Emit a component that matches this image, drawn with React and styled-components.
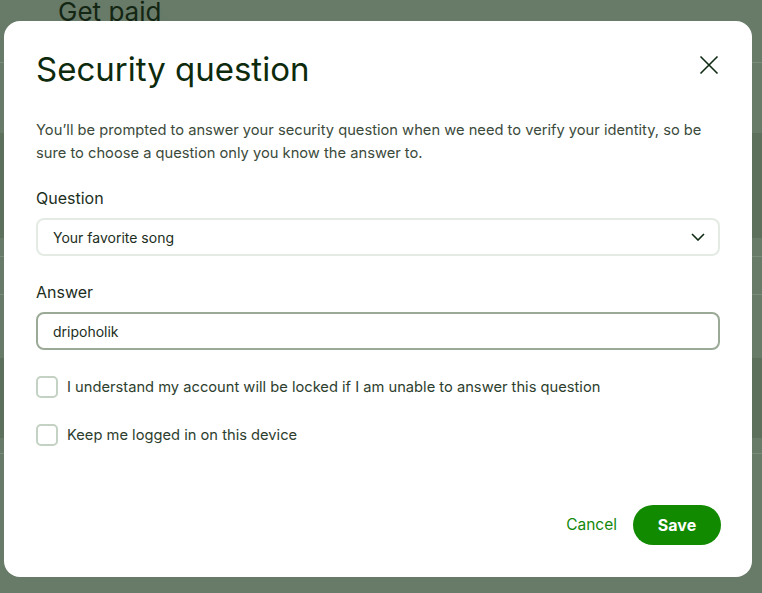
import React, { useState } from 'react';
import styled, { createGlobalStyle } from 'styled-components';

const GlobalStyle = createGlobalStyle`
  html, body {
    margin: 0;
    padding: 0;
    height: 100%;
    overflow: hidden;
  }
  body {
    font-family: Inter, 'Liberation Sans', Arial, sans-serif;
    background: #687a68;
  }
  * {
    box-sizing: border-box;
  }
`;

const Page = styled.div`
  position: relative;
  width: 762px;
  height: 593px;
  overflow: hidden;
  background: #687a68;
`;

const Backdrop = styled.div`
  display: flex;
  flex-direction: column;
  height: 100%;
`;

const PageTitle = styled.h1`
  margin: 0;
  padding: 0 0 0 58px;
  font-size: 26px;
  font-weight: 400;
  line-height: 24px;
  height: 64px;
  color: #132613;
  border-bottom: 1px solid #7a8b78;
`;

const BgRow = styled.div`
  height: ${(p) => p.h}px;
  background: ${(p) => (p.dark ? '#5c705c' : '#687a68')};
  border-bottom: ${(p) => (p.line ? '1px solid #7a8b78' : 'none')};
`;

const Overlay = styled.div`
  position: absolute;
  inset: 0;
  display: flex;
  align-items: flex-start;
  padding: 21px 0 0 4px;
`;

const Modal = styled.div`
  width: 748px;
  height: 556px;
  background: #ffffff;
  border-radius: 16px;
  padding: 29px 32px 32px;
  display: flex;
  flex-direction: column;
`;

const Header = styled.div`
  display: flex;
  justify-content: space-between;
  align-items: flex-start;
`;

const Title = styled.h2`
  margin: 0;
  font-size: 33px;
  font-weight: 400;
  line-height: 38px;
  color: #0d2a0d;
`;

const CloseButton = styled.button`
  border: none;
  background: transparent;
  padding: 0;
  margin: 3px -1px 0 0;
  width: 24px;
  height: 24px;
  cursor: pointer;
  display: flex;
  align-items: center;
  justify-content: center;
`;

const Intro = styled.p`
  margin: 31px 0 0;
  font-size: 14.7px;
  line-height: 23px;
  color: #3b4a3b;
`;

const Label = styled.label`
  display: block;
  margin-top: ${(p) => p.top}px;
  font-size: 16px;
  line-height: 24px;
  color: #1c2e1c;
`;

const SelectBox = styled.div`
  margin-top: 8px;
  height: 38px;
  border: 2px solid #e4ebe4;
  border-radius: 8px;
  display: flex;
  align-items: center;
  justify-content: space-between;
  padding: 0 13px 0 15px;
  font-size: 14px;
  color: #1c2e1c;
`;

const TextInput = styled.input`
  margin-top: 8px;
  height: 38px;
  width: 100%;
  border: 2px solid #9aaa96;
  border-radius: 8px;
  padding: 0 15px;
  font-family: Inter, 'Liberation Sans', Arial, sans-serif;
  font-size: 14px;
  color: #1c2e1c;
  outline: none;
`;

const CheckRow = styled.label`
  display: flex;
  align-items: center;
  gap: 9px;
  margin-top: ${(p) => p.top}px;
  font-size: 14.7px;
  line-height: 22px;
  color: #2e3e2e;
  cursor: pointer;
`;

const Box = styled.span`
  width: 22px;
  height: 22px;
  flex-shrink: 0;
  border: 2px solid #c3d2c3;
  border-radius: 5px;
  background: ${(p) => (p.checked ? '#128a00' : '#fff')};
`;

const Footer = styled.div`
  margin-top: auto;
  display: flex;
  justify-content: flex-end;
  align-items: center;
  gap: 16px;
`;

const LinkButton = styled.button`
  border: none;
  background: transparent;
  font-family: Inter, 'Liberation Sans', Arial, sans-serif;
  font-size: 15.5px;
  color: #14880a;
  padding: 0;
  margin-bottom: 2px;
  cursor: pointer;
`;

const PrimaryButton = styled.button`
  border: none;
  background: #128a00;
  color: #fff;
  font-family: Inter, 'Liberation Sans', Arial, sans-serif;
  font-weight: 700;
  font-size: 16px;
  height: 40px;
  width: 88px;
  border-radius: 20px;
  margin-right: -1px;
  cursor: pointer;
`;

const bgRows = [
  { h: 70 },
  { h: 106, dark: true },
  { h: 20, line: true },
  { h: 38, line: true },
  { h: 64 },
  { h: 80, dark: true },
  { h: 17, line: true },
  { h: 140 },
];

const App = () => {
  const [locked, setLocked] = useState(false);
  const [remember, setRemember] = useState(false);
  const [answer, setAnswer] = useState('dripoholik');

  return (
    <>
      <GlobalStyle />
      <Page>
        <Backdrop>
          <PageTitle>Get paid</PageTitle>
          {bgRows.map((r, i) => (
            <BgRow key={i} h={r.h} dark={r.dark} line={r.line} />
          ))}
        </Backdrop>
        <Overlay>
          <Modal>
            <Header>
              <Title>Security question</Title>
              <CloseButton aria-label="Close">
                <svg width="20" height="20" viewBox="0 0 20 20">
                  <path d="M1.5 1.5L18.5 18.5M18.5 1.5L1.5 18.5" stroke="#0f2a12" strokeWidth="1.6" fill="none" />
                </svg>
              </CloseButton>
            </Header>
            <Intro>
              You’ll be prompted to answer your security question when we need to verify your identity, so be
              sure to choose a question only you know the answer to.
            </Intro>
            <Label top={21}>Question</Label>
            <SelectBox>
              <span>Your favorite song</span>
              <svg width="14" height="8" viewBox="0 0 14 8">
                <path d="M1 1L7 7L13 1" stroke="#0f2a12" strokeWidth="1.6" fill="none" />
              </svg>
            </SelectBox>
            <Label top={24}>Answer</Label>
            <TextInput value={answer} onChange={(e) => setAnswer(e.target.value)} />
            <CheckRow top={26} onClick={() => setLocked(!locked)}>
              <Box checked={locked} />
              I understand my account will be locked if I am unable to answer this question
            </CheckRow>
            <CheckRow top={26} onClick={() => setRemember(!remember)}>
              <Box checked={remember} />
              Keep me logged in on this device
            </CheckRow>
            <Footer>
              <LinkButton>Cancel</LinkButton>
              <PrimaryButton>Save</PrimaryButton>
            </Footer>
          </Modal>
        </Overlay>
      </Page>
    </>
  );
};

export default App;
